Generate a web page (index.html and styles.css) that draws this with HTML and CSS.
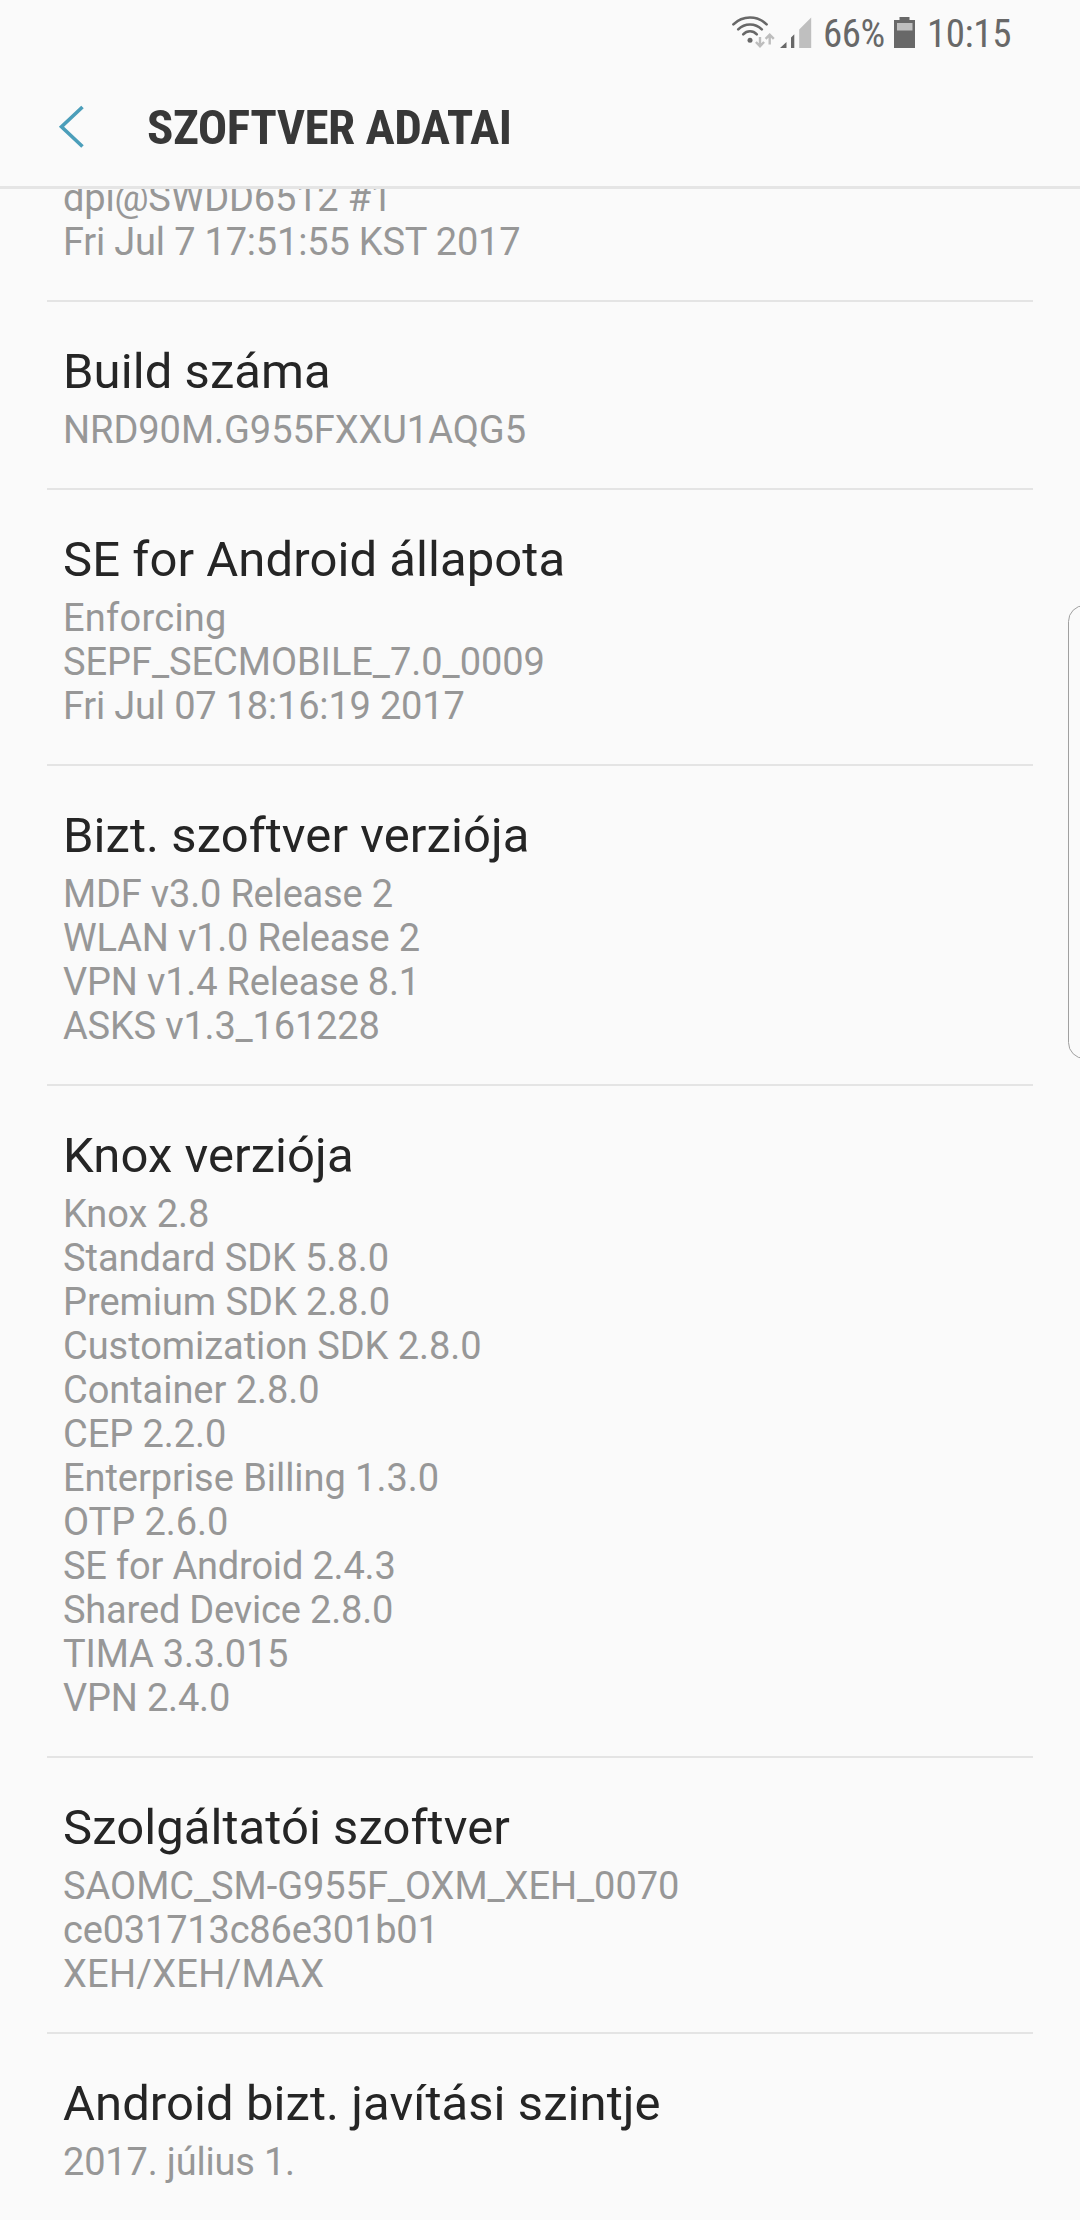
FILE: index.html
```
<!DOCTYPE html>
<html lang="hu">
<head>
    <meta charset="UTF-8">
    <meta name="viewport" content="width=device-width, initial-scale=1.0">
    <title>Szoftver adatai</title>
    <link rel="stylesheet" href="styles.css">
</head>
<body>
    <div class="screen">
        <div class="status-bar">
            <svg class="wifi-icon" width="44" height="34" viewBox="0 0 44 34">
                <g fill="none" stroke="#686868" stroke-width="2.6" stroke-linecap="round">
                    <path d="M2.4 10.4C11.5 1.200 26.500 1.200 35.600 10.4"/>
                    <path d="M7.200 15.400C13.800 8.800 24.200 8.800 30.800 15.400"/>
                    <path d="M12.200 20.300C16 16.300 22 16.300 25.800 20.300"/>
                </g>
                <circle cx="19" cy="26.200" r="2.500" fill="#686868"/>
                <g fill="none" stroke="#bdbdbd" stroke-width="2.400">
                    <path d="M29 23v9M24.900 28l4.100 4.200 4.100-4.200"/>
                    <path d="M38.700 30.500v-9.500M34.600 24.900l4.100-4.200 4.100 4.200"/>
                </g>
            </svg>
            <svg class="signal-icon" width="32" height="32" viewBox="0 0 32 32">
                <path fill="#686868" d="M0 31L6.500 25v6zM11 20.500L14.300 17.200v13.800H11z"/>
                <path fill="#bfbfbf" d="M19.200 12.500L31.200 0.500v30.500h-12z"/>
            </svg>
            <span class="battery-level">66%</span>
            <svg class="battery-icon" width="22" height="32" viewBox="0 0 22 32">
                <path fill="#686868" d="M5.500 0h10v3H21v28H0V3h5.500z"/>
                <path fill="#bfbfbf" d="M3 6h15.500v7.500H3z"/>
            </svg>
            <span class="clock">10:15</span>
        </div>

        <div class="app-bar">
            <svg class="back-icon" width="28" height="44" viewBox="0 0 28 44">
                <path d="M24.500 2L3.500 21.700 24.500 41.500" fill="none" stroke="#4b9eba" stroke-width="3.600"/>
            </svg>
            <h1>SZOFTVER ADATAI</h1>
        </div>

        <div class="list">
            <div class="item">
                <p class="tight">dpi@SWDD6512 #1<br>Fri Jul 7 17:51:55 KST 2017</p>
            </div>
            <div class="item">
                <h2>Build száma</h2>
                <p>NRD90M.G955FXXU1AQG5</p>
            </div>
            <div class="item">
                <h2>SE for Android állapota</h2>
                <p><span class="loose">Enforcing</span><br>SEPF_SECMOBILE_7.0_0009<br><span class="tight">Fri Jul 07 18:16:19 2017</span></p>
            </div>
            <div class="item">
                <h2>Bizt. szoftver verziója</h2>
                <p class="tight">MDF v3.0 Release 2<br>WLAN v1.0 Release 2<br>VPN v1.4 Release 8.1<br>ASKS v1.3_161228</p>
            </div>
            <div class="item">
                <h2>Knox verziója</h2>
                <p>Knox 2.8<br>Standard SDK 5.8.0<br>Premium SDK 2.8.0<br>Customization SDK 2.8.0<br>Container 2.8.0<br>CEP 2.2.0<br>Enterprise Billing 1.3.0<br>OTP 2.6.0<br><span class="tight">SE for Android 2.4.3<br>Shared Device 2.8.0<br>TIMA 3.3.015<br>VPN 2.4.0</span></p>
            </div>
            <div class="item">
                <h2>Szolgáltatói szoftver</h2>
                <p>SAOMC_SM-G955F_OXM_XEH_0070<br><span class="tight">ce031713c86e301b01</span><br><span class="loose">XEH/XEH/MAX</span></p>
            </div>
            <div class="item">
                <h2>Android bizt. javítási szintje</h2>
                <p class="tight">2017. július 1.</p>
            </div>
        </div>

        <div class="edge-handle"></div>
    </div>
</body>
</html>
```
FILE: styles.css
```
* { margin: 0; padding: 0; box-sizing: border-box; }
body {
    font-family: Roboto, sans-serif;
    background: #fafafa;
    color: #252525;
}
.screen {
    position: relative;
    display: flex;
    flex-direction: column;
    width: 1080px;
    height: 2220px;
    overflow: hidden;
}
.status-bar {
    display: flex;
    justify-content: flex-end;
    height: 66px;
    padding-right: 69px;
    color: #686868;
    font-family: "Roboto Condensed", Roboto, sans-serif;
    font-stretch: 75%;
    font-size: 39px;
    letter-spacing: -0.4px;
    line-height: 69px;
}
.wifi-icon { margin: 14px 5px 0 0; }
.signal-icon { margin: 17px 11px 0 0; }
.battery-icon { margin: 17px 11px 0 9px; }
.app-bar {
    display: flex;
    align-items: center;
    flex: none;
    height: 123px;
    padding: 2px 58px 0;
    border-bottom: 3px solid #e5e5e5;
}
.back-icon { margin-right: 61px; }
h1 {
    padding-top: 2px;
    color: #383838;
    font-family: "Roboto Condensed", Roboto, sans-serif;
    font-stretch: 75%;
    font-size: 49px;
    font-weight: bold;
    letter-spacing: -0.5px;
    line-height: 58px;
}
.list {
    flex: 1;
    overflow: hidden;
}
.item {
    margin: 0 47px;
    padding: 41px 16px 36px;
    border-top: 2px solid #e4e4e4;
}
.item:first-child {
    margin-top: -13px;
    padding-top: 0;
    border-top: none;
}
h2 {
    margin-bottom: 7px;
    font-size: 49px;
    font-weight: normal;
    letter-spacing: 0.07px;
    line-height: 58px;
}
p {
    color: #979797;
    font-size: 38px;
    letter-spacing: -0.05px;
    line-height: 44px;
}
.tight { letter-spacing: -0.19px; }
.loose { letter-spacing: 0.25px; }
.edge-handle {
    position: absolute;
    top: 605px;
    right: -21px;
    width: 33px;
    height: 454px;
    border: 1px solid #a0a0a0;
    border-radius: 17px;
}
```
